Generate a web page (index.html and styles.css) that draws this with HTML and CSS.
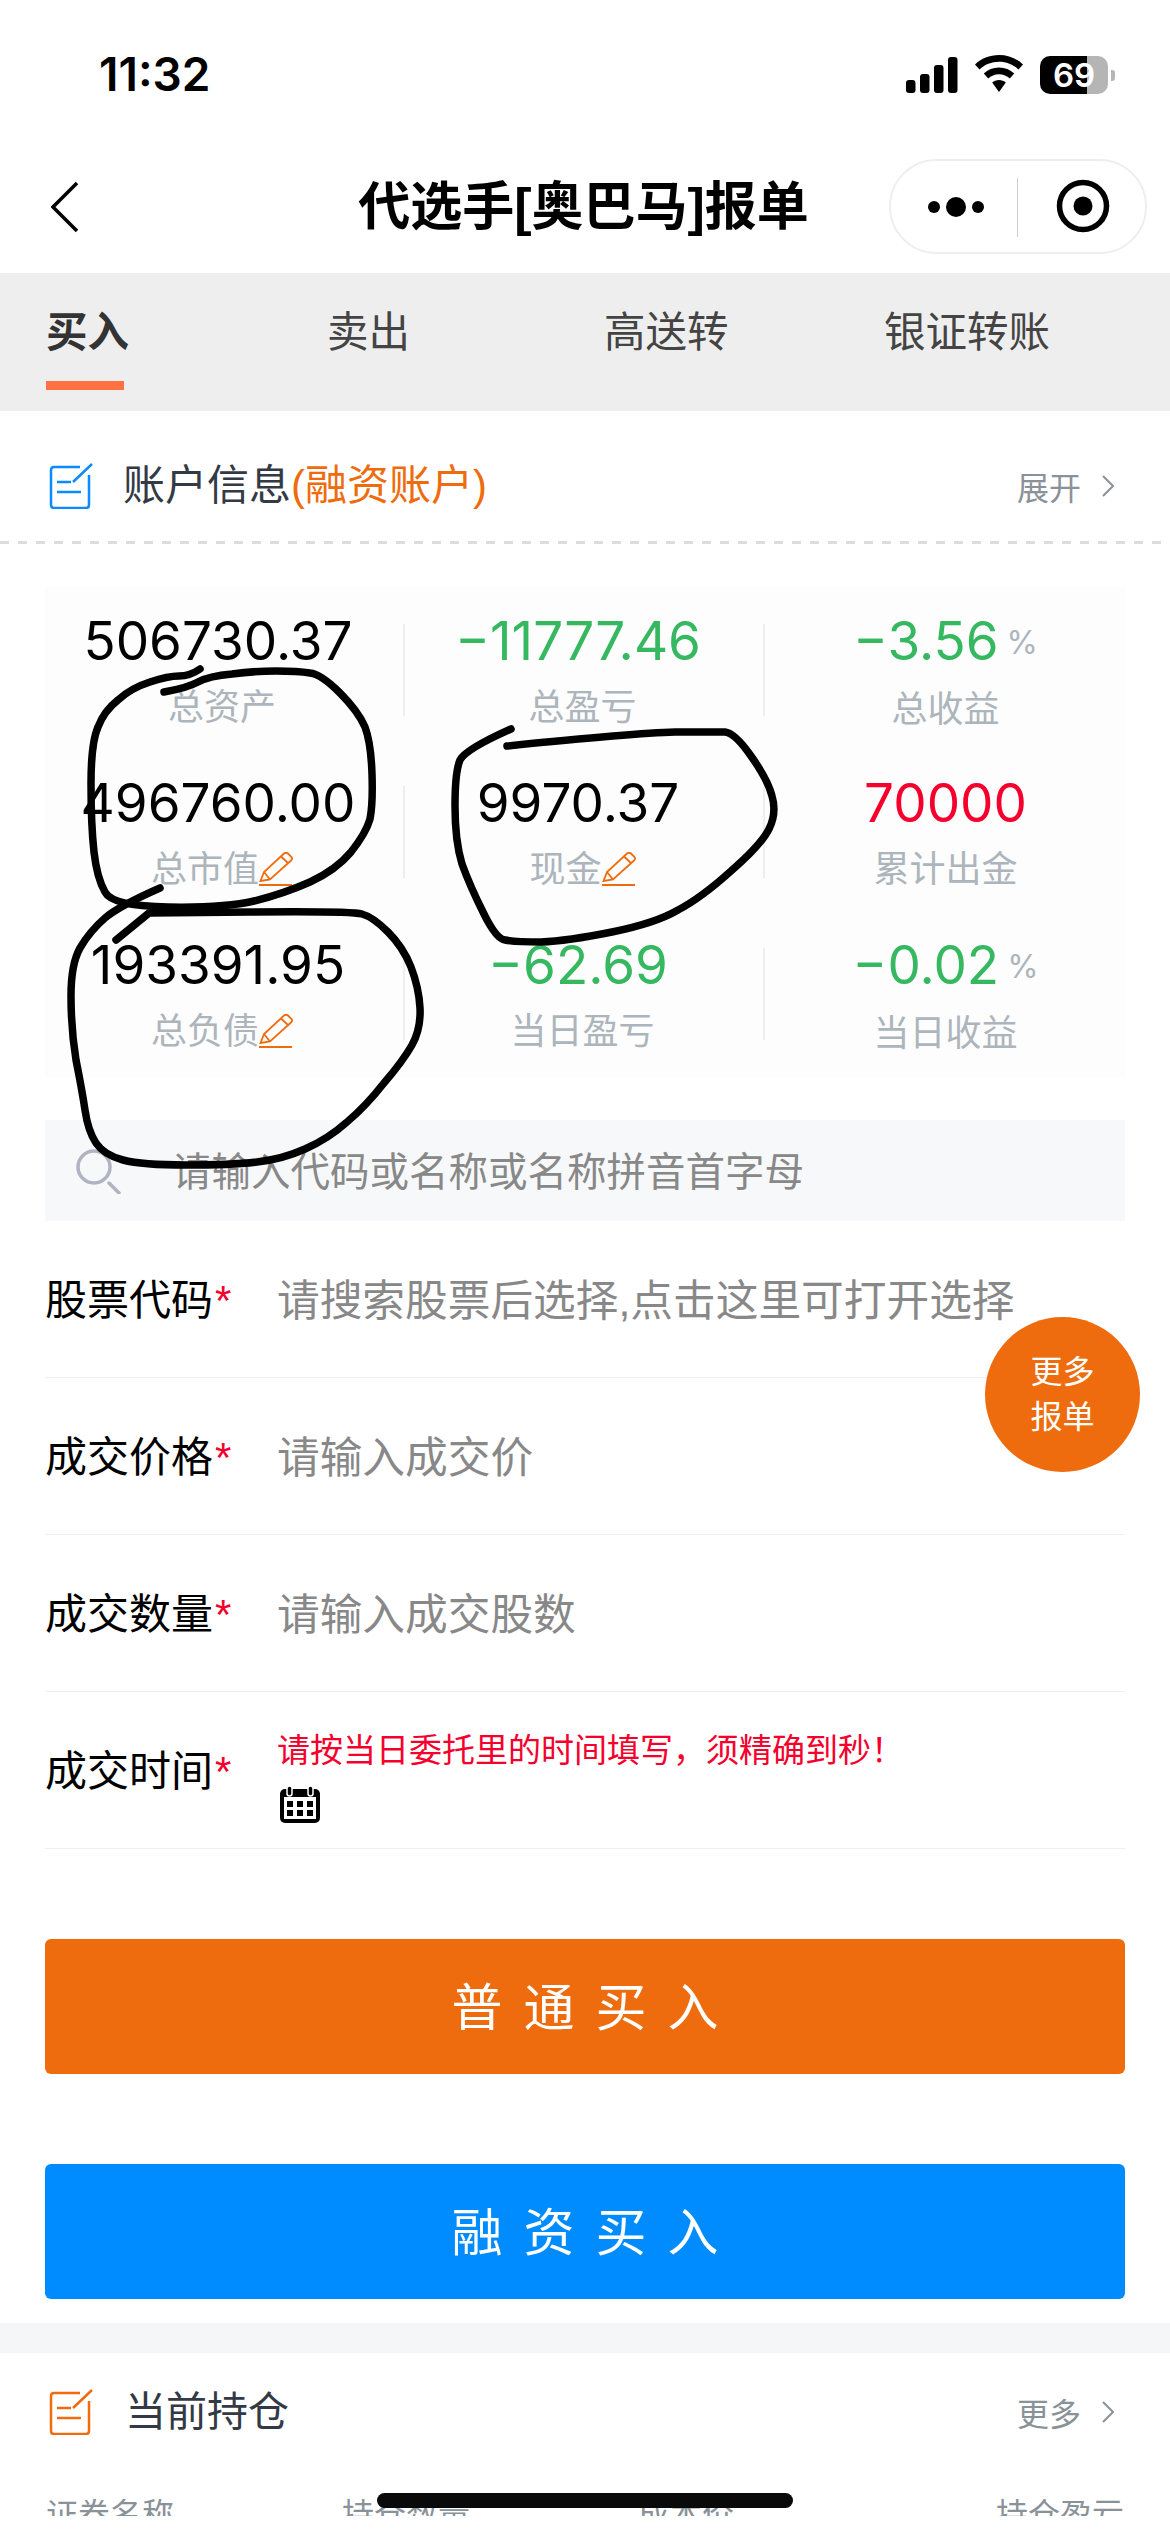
FILE: index.html
```html
<!DOCTYPE html>
<html lang="zh-CN">
<head>
    <meta charset="UTF-8">
    <meta name="viewport" content="width=device-width, initial-scale=1.0">
    <title>代选手报单</title>
    <link rel="stylesheet" href="styles.css">
</head>
<body>
<div class="page">
    <div class="content">
        <header class="status-bar">
            <span class="status-time">11:32</span>
            <div class="status-icons">
                <svg class="icon-signal" viewBox="0 0 52 36"><rect x="0" y="23" width="9.500" height="13" rx="3"/><rect x="14" y="17" width="9.500" height="19" rx="3"/><rect x="28" y="8" width="9.500" height="28" rx="3"/><rect x="42" y="0" width="9.500" height="36" rx="3"/></svg>
                <svg class="icon-wifi" viewBox="0 0 48 37"><path d="M24 0C14.500 0 6.200 3.500 0 9.500L4.500 14.500C9.700 9.600 16.500 6.800 24 6.800S38.300 9.600 43.500 14.500L48 9.500C41.800 3.500 33.500 0 24 0Z"/><path d="M24 12.500C18 12.500 12.800 14.700 8.800 18.500L13.200 23.500C16 20.900 19.800 19.300 24 19.300S32 20.900 34.800 23.500L39.200 18.500C35.200 14.700 30 12.500 24 12.500Z"/><path d="M24 25C21.300 25 19 26 17.200 27.600L24 37L30.800 27.600C29 26 26.700 25 24 25Z"/></svg>
                <div class="battery"><div class="battery-body"><span>69</span></div><i class="battery-nub"></i></div>
            </div>
        </header>

        <nav class="nav-bar">
            <svg class="back-arrow" viewBox="0 0 28 52"><path d="M26 2L2 26L26 50" fill="none" stroke="#000" stroke-width="3.500"/></svg>
            <h1 class="nav-title">代选手[奥巴马]报单</h1>
            <div class="capsule">
                <svg viewBox="0 0 258 95" width="258" height="95">
                    <circle cx="45" cy="48" r="6"/><circle cx="67" cy="48" r="10"/><circle cx="89" cy="48" r="6"/>
                    <rect x="128" y="19" width="1" height="59" fill="#ccc"/>
                    <circle cx="194" cy="47" r="23.500" fill="none" stroke="#000" stroke-width="5.500"/><circle cx="194" cy="47" r="9.500"/>
                </svg>
            </div>
        </nav>

        <div class="tabs">
            <div class="tab tab-active">买入</div>
            <div class="tab">卖出</div>
            <div class="tab">高送转</div>
            <div class="tab">银证转账</div>
        </div>

        <section class="section-head">
            <svg class="note-icon note-blue" viewBox="18 12 46 46"><path d="M50 16H24Q21 16 21 19V54Q21 57 24 57H56Q59 57 59 54V24M62 13L43 31M27 31H41M27 41H51"/></svg>
            <span class="section-title">账户信息<em>(融资账户)</em></span>
            <span class="section-more">展开<svg class="chevron" viewBox="0 0 12 22"><path d="M1 1L11 11L1 21"/></svg></span>
        </section>
        <div class="dash-line"></div>

        <section class="stats">
            <div class="stat">
                <div class="stat-value">506730.37</div>
                <div class="stat-label">总资产</div>
            </div>
            <div class="stat">
                <div class="stat-value green">−11777.46</div>
                <div class="stat-label">总盈亏</div>
            </div>
            <div class="stat">
                <div class="stat-value green">−3.56<small>%</small></div>
                <div class="stat-label">总收益</div>
            </div>
            <div class="stat">
                <div class="stat-value">496760.00</div>
                <div class="stat-label">总市值<svg class="pencil" viewBox="0 0 34 34"><path d="M1.500 29L5 20L25 1.500Q27 0 29 1.500L32.500 5Q34 7 32 8.500L11 27.500ZM22 4.500L29.500 11.500M5 20L11 27.500M0 33H33"/></svg></div>
            </div>
            <div class="stat">
                <div class="stat-value">9970.37</div>
                <div class="stat-label">现金<svg class="pencil" viewBox="0 0 34 34"><path d="M1.500 29L5 20L25 1.500Q27 0 29 1.500L32.500 5Q34 7 32 8.500L11 27.500ZM22 4.500L29.500 11.500M5 20L11 27.500M0 33H33"/></svg></div>
            </div>
            <div class="stat">
                <div class="stat-value red">70000</div>
                <div class="stat-label">累计出金</div>
            </div>
            <div class="stat">
                <div class="stat-value">193391.95</div>
                <div class="stat-label">总负债<svg class="pencil" viewBox="0 0 34 34"><path d="M1.500 29L5 20L25 1.500Q27 0 29 1.500L32.500 5Q34 7 32 8.500L11 27.500ZM22 4.500L29.500 11.500M5 20L11 27.500M0 33H33"/></svg></div>
            </div>
            <div class="stat">
                <div class="stat-value green">−62.69</div>
                <div class="stat-label">当日盈亏</div>
            </div>
            <div class="stat">
                <div class="stat-value green">−0.02<small>%</small></div>
                <div class="stat-label">当日收益</div>
            </div>
        </section>

        <div class="search">
            <svg class="search-icon" viewBox="0 0 46 46"><circle cx="19" cy="19" r="16"/><path d="M34 35L44 45"/></svg>
            <span>请输入代码或名称或名称拼音首字母</span>
        </div>

        <form class="order-form">
            <div class="form-row">
                <label>股票代码<b>*</b></label>
                <span class="placeholder">请搜索股票后选择,点击这里可打开选择</span>
            </div>
            <div class="form-row">
                <label>成交价格<b>*</b></label>
                <span class="placeholder">请输入成交价</span>
            </div>
            <div class="form-row">
                <label>成交数量<b>*</b></label>
                <span class="placeholder">请输入成交股数</span>
            </div>
            <div class="form-row">
                <label>成交时间<b>*</b></label>
                <div class="time-field">
                    <span class="time-hint">请按当日委托里的时间填写，须精确到秒！</span>
                    <svg class="calendar" viewBox="0 0 40 38">
                        <rect x="0" y="4" width="40" height="34" rx="5"/>
                        <rect x="4" y="12" width="32" height="22" fill="#fff"/>
                        <rect x="7" y="1" width="5" height="10" rx="2.500" stroke="#fff" stroke-width="1.500"/>
                        <rect x="28" y="1" width="5" height="10" rx="2.500" stroke="#fff" stroke-width="1.500"/>
                        <rect x="7" y="16" width="6" height="6"/><rect x="17" y="16" width="6" height="6"/><rect x="27" y="16" width="6" height="6"/>
                        <rect x="7" y="25" width="6" height="6"/><rect x="17" y="25" width="6" height="6"/><rect x="27" y="25" width="6" height="6"/>
                    </svg>
                </div>
            </div>
            <button type="button" class="btn btn-orange">普通买入</button>
            <button type="button" class="btn btn-blue">融资买入</button>
        </form>

        <div class="band"></div>

        <section class="section-head section-head-hold">
            <svg class="note-icon note-orange" viewBox="18 12 46 46"><path d="M50 16H24Q21 16 21 19V54Q21 57 24 57H56Q59 57 59 54V24M62 13L43 31M27 31H41M27 41H51"/></svg>
            <span class="section-title">当前持仓</span>
            <span class="section-more">更多<svg class="chevron" viewBox="0 0 12 22"><path d="M1 1L11 11L1 21"/></svg></span>
        </section>

        <div class="table-head">
            <span>证券名称</span>
            <span>持仓数量</span>
            <span>成本价</span>
            <span>持仓盈亏</span>
        </div>
    </div>

    <div class="float-btn">更多<br>报单</div>

    <!-- pen marks drawn over the screenshot -->
    <svg class="scribble" viewBox="0 0 1170 2532">
        <path d="M200 669Q190 676 179 676Q168 676 150 682Q131 688 118 700Q104 711 98 727Q91 743 91 784Q91 825 94 852Q97 878 105 892Q112 906 168 907Q224 908 254 901Q283 894 310 882Q336 870 351 852Q366 833 370 819Q373 804 372 774Q371 743 365 727Q358 711 340 693Q321 674 310 673Q298 671 276 671Q254 671 232 674Q209 676 198 682Q187 688 164 692"/>
        <path d="M160 888Q119 906 105 918Q90 931 80 948Q71 964 71 996Q71 1029 76 1060Q82 1090 85 1110Q88 1131 96 1143Q104 1155 123 1160Q142 1165 186 1165Q231 1165 257 1162Q283 1159 305 1149Q328 1139 347 1122Q366 1106 384 1083Q403 1061 412 1045Q421 1029 420 1008Q419 988 411 967Q403 947 388 932Q373 917 362 914Q351 911 250 912L149 913L116 940"/>
        <path d="M511 729Q466 749 460 760Q455 772 455 806Q455 841 462 864Q470 886 483 912Q496 939 505 940Q515 942 541 942Q567 941 612 932Q656 923 678 910Q701 898 731 871Q761 845 769 829Q777 813 772 796Q768 780 751 756Q735 733 725 732Q716 732 675 732Q634 733 507 746"/>
    </svg>

    <div class="home-indicator"></div>
</div>
</body>
</html>
```

FILE: styles.css
```css
* {
    box-sizing: border-box;
}

body {
    margin: 0;
    background-color: #fff;
    color: #000;
    font-family: "Liberation Sans", "Noto Sans CJK SC", sans-serif;
}

.page {
    position: relative;
    width: 1170px;
    height: 2532px;
    overflow: hidden;
}

.content {
    height: 2516px;
    overflow: hidden;
}

/* status bar */
.status-bar {
    display: flex;
    justify-content: space-between;
    height: 159px;
    padding: 50px 55px 0 99px;
}

.status-time {
    font-family: Inter, sans-serif;
    font-size: 46px;
    font-weight: 600;
    line-height: 48px;
}

.status-icons {
    display: flex;
    gap: 17px;
    height: 40px;
    margin-top: 5px;
}

.icon-signal {
    width: 52px;
    height: 36px;
    margin-top: 2px;
}

.icon-wifi {
    width: 48px;
    height: 37px;
}

.battery {
    display: flex;
    align-items: center;
    gap: 3px;
}

.battery-body {
    width: 68px;
    height: 38px;
    border-radius: 10px;
    background: linear-gradient(to right, #000 47px, #b5b5b5 47px);
    color: #fff;
    font-family: Inter, sans-serif;
    font-size: 33px;
    font-weight: 600;
    line-height: 38px;
    text-align: center;
}

.battery-nub {
    width: 4px;
    height: 11px;
    border-radius: 0 3px 3px 0;
    background-color: #b5b5b5;
}

/* nav */
.nav-bar {
    display: grid;
    grid-template-columns: 1fr auto 1fr;
    align-items: center;
    height: 114px;
    padding: 0 23px 19px 20px;
}

.back-arrow {
    width: 28px;
    height: 52px;
    margin-left: 31px;
}

.nav-title {
    margin: 0;
    font-size: 52px;
    font-weight: bold;
    line-height: 60px;
    white-space: nowrap;
}

.capsule {
    justify-self: end;
    width: 258px;
    height: 95px;
    border: 2px solid #eee;
    border-radius: 48px;
}

.capsule svg {
    display: block;
    margin: -2px;
}

/* tabs */
.tabs {
    display: grid;
    grid-template-columns: 281px 277px 280px auto;
    height: 138px;
    padding: 36px 0 0 46px;
    background-color: #eee;
}

.tab {
    color: #444;
    font-size: 41.500px;
    line-height: 48px;
}

.tab-active {
    color: #333;
    font-weight: bold;
}

.tab-active::after {
    content: "";
    display: block;
    width: 78px;
    height: 9px;
    margin-top: 24px;
    background-color: #ff7043;
}

/* section headers */
.section-head {
    display: flex;
    align-items: center;
    gap: 29px;
    height: 130px;
    padding: 20px 56px 0 48px;
}

.note-icon {
    flex: none;
    width: 46px;
    height: 46px;
    fill: none;
    stroke-width: 2.500;
}

.note-blue {
    stroke: #0a8cff;
}

.note-orange {
    stroke: #ee6c0e;
}

.section-title {
    flex: 1;
    color: #333a45;
    font-size: 42px;
    line-height: 50px;
}

.section-title em {
    color: #ee6c0e;
    font-style: normal;
}

.section-more {
    display: flex;
    align-items: center;
    gap: 21px;
    color: #8a9299;
    font-size: 32px;
}

.chevron {
    width: 12px;
    height: 22px;
    fill: none;
    stroke: #8a9299;
    stroke-width: 2;
}

.dash-line {
    height: 3px;
    background: repeating-linear-gradient(to right, #dcdcdc 0, #dcdcdc 9px, transparent 9px, transparent 18px);
}

/* account numbers */
.stats {
    display: grid;
    grid-template-columns: 358px 360px 360px;
    row-gap: 70px;
    margin: 43px 45px 0;
    padding: 37px 0;
    background-color: #fdfdfd;
}

.stat {
    height: 92px;
    text-align: center;
}

.stat:nth-child(3n+1) {
    padding-right: 4px;
}

.stat:nth-child(3n+1) .stat-value {
    padding-right: 8px;
}

.stat:nth-child(3n+2) {
    padding-right: 3px;
}

.stat:nth-child(3n+2) .stat-value {
    padding-right: 9px;
}

.stat:nth-child(3n) {
    padding-left: 3px;
}

.stat:not(:nth-child(3n+1)) {
    border-left: 2px solid #eee;
}

.stat-value {
    font-family: Inter, sans-serif;
    font-size: 53px;
    line-height: 34px;
}

.stat-value small {
    margin-left: 8px;
    color: #adb5bc;
    font-size: 32px;
    vertical-align: 6px;
}

.green {
    color: #35b85f;
}

.red {
    color: #f5002d;
}

.stat-label {
    margin-top: 32px;
    color: #adb5bc;
    font-size: 36px;
    line-height: 36px;
}

.pencil {
    width: 34px;
    height: 34px;
    vertical-align: -4px;
    fill: none;
    stroke: #ee6c0e;
    stroke-width: 1.800;
}

/* search */
.search {
    display: flex;
    align-items: center;
    gap: 51px;
    height: 101px;
    margin: 43px 45px 0;
    padding: 0 0 5px 30px;
    background-color: #f7f8f9;
    color: #888;
    font-size: 39.500px;
}

.search-icon {
    flex: none;
    width: 46px;
    height: 46px;
    margin-top: 5px;
    fill: none;
    stroke: #b0b3c2;
    stroke-width: 3.500;
    stroke-linecap: round;
}

/* form */
.order-form {
    margin: 0 45px;
}

.form-row {
    display: flex;
    align-items: center;
    height: 157px;
    padding-bottom: 5px;
    border-bottom: 1px solid #f0f0f0;
    font-size: 42px;
}

.form-row label {
    flex: none;
    width: 232px;
    white-space: nowrap;
}

.form-row b {
    margin-left: 2px;
    color: #f5002d;
    font-weight: normal;
}

.placeholder {
    color: #888;
    font-size: 42.700px;
    white-space: nowrap;
}

.time-field {
    display: flex;
    flex-direction: column;
    align-items: flex-start;
    gap: 16px;
    margin-top: 21px;
}

.time-hint {
    color: #f5002d;
    font-size: 33px;
    line-height: 36px;
}

.calendar {
    width: 40px;
    height: 38px;
    margin-left: 3px;
}

.btn {
    display: block;
    width: 100%;
    height: 135px;
    margin-top: 90px;
    padding: 0 0 6px;
    border: none;
    border-radius: 6px;
    color: #fff;
    font-family: inherit;
    font-size: 51px;
    letter-spacing: 21px;
    text-indent: 21px;
}

.btn-orange {
    background-color: #ee6c0e;
}

.btn-blue {
    background-color: #008cff;
}

.band {
    height: 30px;
    margin-top: 24px;
    background-color: #f5f6f8;
}

/* holdings */
.section-head-hold {
    gap: 31px;
    height: 118px;
    padding-top: 0;
}

.section-head-hold .section-title {
    font-size: 41px;
}

.table-head {
    display: grid;
    grid-template-columns: 296px 296px 358px auto;
    padding: 26px 0 0 46px;
    color: #8a9299;
    font-size: 32px;
    line-height: 36px;
}

/* overlays */
.float-btn {
    position: absolute;
    left: 985px;
    top: 1317px;
    display: flex;
    align-items: center;
    justify-content: center;
    width: 155px;
    height: 155px;
    border-radius: 50%;
    background-color: #ee6c0e;
    color: #fff;
    font-size: 32px;
    line-height: 45px;
    text-align: center;
}

.scribble {
    position: absolute;
    left: 0;
    top: 0;
    width: 1170px;
    height: 2532px;
    fill: none;
    stroke: #000;
    stroke-width: 7.500;
    stroke-linecap: round;
    stroke-linejoin: round;
}

.home-indicator {
    position: absolute;
    left: 377px;
    top: 2493px;
    width: 416px;
    height: 15px;
    border-radius: 8px;
    background-color: #0a0a0a;
}
```
